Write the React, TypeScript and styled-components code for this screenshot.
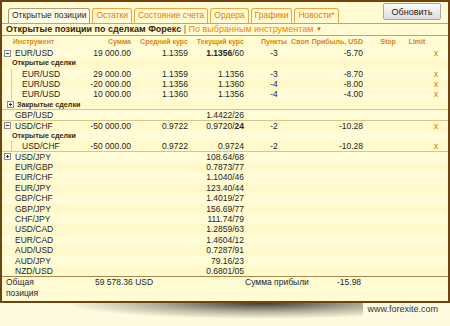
import React from 'react';
import styled, { createGlobalStyle } from 'styled-components';

const Global = createGlobalStyle`
  html, body { margin: 0; padding: 0; background: #fdfadf; }
  body { font-family: "Liberation Sans", Arial, sans-serif; }
`;

const COLS = '86px 45px 57px 56px 44px 20px 54px 38px 30px 1fr';

const Page = styled.div`
  width: 450px;
  height: 326px;
  display: flex;
  flex-direction: column;
  overflow: hidden;
`;

const Frame = styled.div`
  box-sizing: border-box;
  width: 450px;
  height: 303px;
  border: 2px solid #6e4312;
  background: #fffcd4;
  display: flex;
  flex-direction: column;
  overflow: hidden;
`;

const TabBar = styled.div`
  display: flex;
  align-items: flex-end;
  height: 21px;
  padding: 0 7px 0 6px;
  border-bottom: 1px solid #c9a458;
`;

const Tab = styled.div<{ $active?: boolean }>`
  box-sizing: border-box;
  height: 15px;
  line-height: 13px;
  padding: 0 3px;
  margin-right: 2px;
  border: 1px solid ${(p) => (p.$active ? '#b39a76' : '#eca54a')};
  border-bottom: none;
  border-radius: 3px 3px 0 0;
  font-size: 8.5px;
  white-space: nowrap;
  color: ${(p) => (p.$active ? '#2a2a2a' : '#e57c00')};
  background: ${(p) => (p.$active ? '#fffde6' : '#fffad2')};
`;

const RefreshButton = styled.button`
  margin-left: auto;
  align-self: flex-start;
  margin-top: 1px;
  box-sizing: border-box;
  width: 58px;
  height: 17px;
  padding: 0;
  font: 9px "Liberation Sans", Arial, sans-serif;
  color: #222;
  border: 1px solid #a9a9a9;
  border-radius: 2px;
  background: linear-gradient(#fcfcfc, #dcdcdc);
`;

const Title = styled.div`
  height: 11px;
  line-height: 11px;
  padding-left: 4px;
  font-size: 9px;
  white-space: nowrap;
  border-bottom: 1px solid #c9a458;
`;

const TitleMain = styled.span`
  font-weight: bold;
  color: #3a2406;
`;

const Divider = styled.span`
  color: #555;
`;

const Filter = styled.span`
  color: #e8860c;
`;

const Arrow = styled.span`
  font-size: 6px;
  color: #d8600a;
  vertical-align: 1px;
`;

const HeaderRow = styled.div`
  display: grid;
  grid-template-columns: ${COLS};
  height: 11.8px;
  line-height: 11.8px;
  font-size: 7px;
  font-weight: bold;
  color: #e2840e;
  white-space: nowrap;
`;

const Body = styled.div`
  display: flex;
  flex-direction: column;
`;

const Row = styled.div<{ $alt?: boolean; $sep?: boolean }>`
  display: grid;
  grid-template-columns: ${COLS};
  box-sizing: border-box;
  height: 10.4px;
  line-height: 10.4px;
  font-size: 8.5px;
  color: #262626;
  white-space: nowrap;
  background: ${(p) => (p.$alt ? '#fff9cb' : '#fffcd7')};
  border-bottom: ${(p) => (p.$sep ? '1px solid #d5c690' : 'none')};
`;

const Cell = styled.div`
  overflow: visible;
  white-space: nowrap;
`;

const InstCell = styled(Cell)<{ $pad: number }>`
  display: flex;
  align-items: center;
  height: 100%;
  padding-left: ${(p) => p.$pad}px;
`;

const LabelCell = styled(InstCell)`
  grid-column: 1 / -1;
  font-size: 7.2px;
  font-weight: bold;
  color: #3a2a10;
`;

const ChildInst = styled(Cell)`
  margin-left: 9px;
  padding-left: 10px;
  border-left: 1px solid #d8cca4;
  height: 100%;
`;

const NumCell = styled(Cell)`
  text-align: right;
  padding-right: 2px;
`;

const PtsCell = styled(Cell)`
  text-align: center;
  padding-left: 12px;
`;

const SwapCell = styled(Cell)`
  text-align: center;
`;

const ProfitCell = styled(Cell)`
  text-align: right;
  padding-right: 1px;
`;

const StopCell = styled(Cell)`
  text-align: center;
  padding-left: 10px;
`;

const LimitCell = styled(Cell)`
  text-align: center;
`;

const CloseCell = styled(Cell)`
  padding-left: 2px;
  color: #e26f00;
  font-size: 8.5px;
`;

const HeadInst = styled(Cell)`
  padding-left: 11px;
`;

const BoxSvg = styled.svg`
  flex: none;
  display: block;
`;

const Gap = styled.span<{ $w: number }>`
  display: inline-block;
  width: ${(p) => p.$w}px;
`;

const Footer = styled.div`
  display: grid;
  grid-template-columns: 86px 157px 92px 1fr;
  border-top: 1px solid #a8854c;
  font-size: 8.5px;
  line-height: 10.4px;
  color: #262626;
`;

const TotalLabel = styled.div`
  padding-left: 4px;
  width: 40px;
`;

const TotalValue = styled.div`
  padding-left: 7px;
  white-space: nowrap;
`;

const SumLabel = styled.div`
  white-space: nowrap;
`;

const SumValue = styled.div`
  white-space: nowrap;
`;

const Bottom = styled.div`
  display: flex;
  align-items: flex-start;
  height: 23px;
`;

const Shadow = styled.div`
  flex: 1;
  height: 16px;
  margin-left: 45px;
  background: radial-gradient(ellipse 62% 100% at 68% 0%, rgba(45, 38, 30, 0.9), rgba(45, 38, 30, 0.35) 55%, rgba(45, 38, 30, 0) 100%);
`;

const Site = styled.div`
  padding: 1px 12px 0 4px;
  font-size: 9px;
  line-height: 10px;
  color: #333;
`;

type RowData = {
  kind: 'pair' | 'label' | 'child' | 'closed';
  icon?: 'minus' | 'plus';
  name: string;
  sum?: string;
  avg?: string;
  cur?: string;
  bold?: string;
  pts?: string;
  profit?: string;
  close?: boolean;
  sep?: boolean;
};

const rows: RowData[] = [
  { kind: 'pair', icon: 'minus', name: 'EUR/USD', sum: '19 000.00', avg: '1.1359', cur: '1.1356/60', bold: '1.1356', pts: '-3', profit: '-5.70', close: true },
  { kind: 'label', name: 'Открытые сделки' },
  { kind: 'child', name: 'EUR/USD', sum: '29 000.00', avg: '1.1359', cur: '1.1356', pts: '-3', profit: '-8.70', close: true },
  { kind: 'child', name: 'EUR/USD', sum: '-20 000.00', avg: '1.1356', cur: '1.1360', pts: '-4', profit: '-8.00', close: true },
  { kind: 'child', name: 'EUR/USD', sum: '10 000.00', avg: '1.1360', cur: '1.1356', pts: '-4', profit: '-4.00', close: true },
  { kind: 'closed', name: 'Закрытые сделки', sep: true },
  { kind: 'pair', name: 'GBP/USD', cur: '1.4422/26', sep: true },
  { kind: 'pair', icon: 'minus', name: 'USD/CHF', sum: '-50 000.00', avg: '0.9722', cur: '0.9720/24', bold: '24', pts: '-2', profit: '-10.28', close: true },
  { kind: 'label', name: 'Открытые сделки' },
  { kind: 'child', name: 'USD/CHF', sum: '-50 000.00', avg: '0.9722', cur: '0.9724', pts: '-2', profit: '-10.28', close: true, sep: true },
  { kind: 'pair', icon: 'plus', name: 'USD/JPY', cur: '108.64/68' },
  { kind: 'pair', name: 'EUR/GBP', cur: '0.7873/77' },
  { kind: 'pair', name: 'EUR/CHF', cur: '1.1040/46' },
  { kind: 'pair', name: 'EUR/JPY', cur: '123.40/44' },
  { kind: 'pair', name: 'GBP/CHF', cur: '1.4019/27' },
  { kind: 'pair', name: 'GBP/JPY', cur: '156.69/77' },
  { kind: 'pair', name: 'CHF/JPY', cur: '111.74/79' },
  { kind: 'pair', name: 'USD/CAD', cur: '1.2859/63' },
  { kind: 'pair', name: 'EUR/CAD', cur: '1.4604/12' },
  { kind: 'pair', name: 'AUD/USD', cur: '0.7287/91' },
  { kind: 'pair', name: 'AUD/JPY', cur: '79.16/23' },
  { kind: 'pair', name: 'NZD/USD', cur: '0.6801/05' },
];

const TreeBox = ({ type }: { type: 'minus' | 'plus' }) => (
  <BoxSvg width="7" height="7" viewBox="0 0 7 7">
    <rect x="0.5" y="0.5" width="6" height="6" fill="#fbfbfb" stroke="#8c8c8c" />
    <path d="M2 3.5h3" stroke="#333" />
    {type === 'plus' && <path d="M3.5 2v3" stroke="#333" />}
  </BoxSvg>
);

const Price = ({ cur, bold }: { cur?: string; bold?: string }) => {
  if (!cur) return null;
  if (bold && cur.startsWith(bold)) return <><b>{bold}</b>{cur.slice(bold.length)}</>;
  if (bold && cur.endsWith(bold)) return <>{cur.slice(0, cur.length - bold.length)}<b>{bold}</b></>;
  return <>{cur}</>;
};

const DataRow = ({ r, alt }: { r: RowData; alt: boolean }) => {
  if (r.kind === 'label') {
    return (
      <Row $alt={alt} $sep={r.sep}>
        <LabelCell $pad={10}>{r.name}</LabelCell>
      </Row>
    );
  }
  if (r.kind === 'closed') {
    return (
      <Row $alt={alt} $sep={r.sep}>
        <LabelCell $pad={5}>
          <TreeBox type="plus" />
          <Gap $w={3} />
          {r.name}
        </LabelCell>
      </Row>
    );
  }
  return (
    <Row $alt={alt} $sep={r.sep}>
      {r.kind === 'child' ? (
        <InstCell $pad={0}>
          <ChildInst>{r.name}</ChildInst>
        </InstCell>
      ) : r.icon ? (
        <InstCell $pad={2}>
          <TreeBox type={r.icon} />
          <Gap $w={4} />
          {r.name}
        </InstCell>
      ) : (
        <InstCell $pad={13}>{r.name}</InstCell>
      )}
      <NumCell>{r.sum}</NumCell>
      <NumCell>{r.avg}</NumCell>
      <NumCell>
        <Price cur={r.cur} bold={r.bold} />
      </NumCell>
      <PtsCell>{r.pts}</PtsCell>
      <SwapCell />
      <ProfitCell>{r.profit}</ProfitCell>
      <StopCell />
      <LimitCell />
      <CloseCell>{r.close ? 'x' : ''}</CloseCell>
    </Row>
  );
};

export default function App() {
  return (
    <Page>
      <Global />
      <Frame>
        <TabBar>
          <Tab $active>Открытые позиции</Tab>
          <Tab>Остатки</Tab>
          <Tab>Состояние счета</Tab>
          <Tab>Ордера</Tab>
          <Tab>Графики</Tab>
          <Tab>Новости*</Tab>
          <RefreshButton>Обновить</RefreshButton>
        </TabBar>
        <Title>
          <TitleMain>Открытые позиции по сделкам Форекс</TitleMain>
          <Divider> | </Divider>
          <Filter>
            По выбранным инструментам <Arrow>▼</Arrow>
          </Filter>
        </Title>
        <HeaderRow>
          <HeadInst>Инструмент</HeadInst>
          <NumCell>Сумма</NumCell>
          <NumCell>Средний курс</NumCell>
          <NumCell>Текущий курс</NumCell>
          <PtsCell>Пункты</PtsCell>
          <SwapCell>Своп</SwapCell>
          <ProfitCell>Прибыль, USD</ProfitCell>
          <StopCell>Stop</StopCell>
          <LimitCell>Limit</LimitCell>
          <Cell />
        </HeaderRow>
        <Body>
          {rows.map((r, i) => (
            <DataRow key={i} r={r} alt={i % 2 === 1} />
          ))}
        </Body>
        <Footer>
          <TotalLabel>Общая позиция</TotalLabel>
          <TotalValue>59 578.36 USD</TotalValue>
          <SumLabel>Сумма прибыли</SumLabel>
          <SumValue>-15.98</SumValue>
        </Footer>
      </Frame>
      <Bottom>
        <Shadow />
        <Site>www.forexite.com</Site>
      </Bottom>
    </Page>
  );
}
